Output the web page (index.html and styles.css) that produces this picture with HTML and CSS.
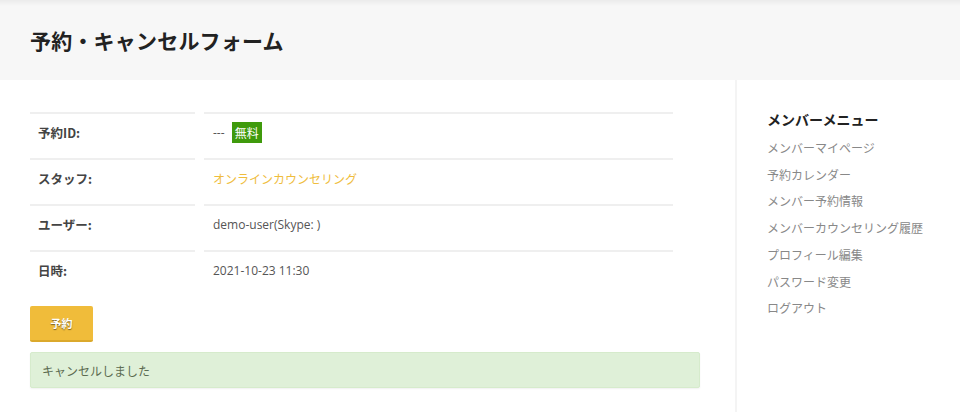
FILE: index.html
```html
<!DOCTYPE html>
<html lang="ja">
<head>
<meta charset="utf-8">
<link rel="stylesheet" href="styles.css">
</head>
<body>
<header class="page-header">
  <h1 class="page-title">予約・キャンセルフォーム</h1>
</header>
<div class="page-body">
  <main class="main">
    <div class="info-table">
      <div class="cell label">予約ID:</div>
      <div class="cell value">--- <span class="badge">無料</span></div>
      <div class="cell label">スタッフ:</div>
      <div class="cell value"><a class="staff-link" href="#">オンラインカウンセリング</a></div>
      <div class="cell label">ユーザー:</div>
      <div class="cell value">demo-user(Skype: )</div>
      <div class="cell label">日時:</div>
      <div class="cell value">2021-10-23 11:30</div>
    </div>
    <button class="btn-reserve" type="button">予約</button>
    <div class="alert-success">キャンセルしました</div>
  </main>
  <aside class="sidebar">
    <h2 class="sidebar-title">メンバーメニュー</h2>
    <ul class="menu">
      <li><a href="#">メンバーマイページ</a></li>
      <li><a href="#">予約カレンダー</a></li>
      <li><a href="#">メンバー予約情報</a></li>
      <li><a href="#">メンバーカウンセリング履歴</a></li>
      <li><a href="#">プロフィール編集</a></li>
      <li><a href="#">パスワード変更</a></li>
      <li><a href="#">ログアウト</a></li>
    </ul>
  </aside>
</div>
</body>
</html>
```

FILE: styles.css
```css
* { box-sizing: border-box; }
html, body { margin: 0; padding: 0; }
body {
  font-family: "Open Sans", "Noto Sans CJK JP", sans-serif;
  background: #fff;
  color: #555;
  width: 960px;
  height: 412px;
  overflow: hidden;
}
.page-header {
  height: 80px;
  background: linear-gradient(#ebebeb 0, #f7f7f7 6px, #f7f7f7 100%);
  display: flex;
  align-items: center;
  padding-left: 30px;
}
.page-title {
  margin: 0;
  font-family: "Noto Sans CJK JP", sans-serif;
  font-size: 21px;
  font-weight: 700;
  color: #222;
  letter-spacing: 0.2px;
}
.page-body {
  display: flex;
}
.main {
  width: 735px;
  padding: 32px 35px 0 30px;
}
.info-table {
  display: grid;
  grid-template-columns: 165px 469px;
  column-gap: 9px;
}
.cell {
  height: 46px;
  border-top: 2px solid #efefef;
  display: flex;
  align-items: center;
  padding-bottom: 7px;
  font-size: 12px;
}
.label {
  padding-left: 8px;
  font-family: "Noto Sans CJK JP", sans-serif;
  font-weight: 700;
  font-size: 12.5px;
  color: #444;
}
.value {
  padding-left: 9px;
  color: #555;
  white-space: pre;
}
.badge {
  display: inline-block;
  background: #3f9a0c;
  color: #fff;
  font-family: "Noto Sans CJK JP", sans-serif;
  font-size: 12px;
  line-height: 21px;
  padding: 0 3px;
  margin-left: 4px;
}
.staff-link {
  color: #efbd3d;
  text-decoration: none;
  font-family: "Noto Sans CJK JP", sans-serif;
}
.btn-reserve {
  display: block;
  margin-top: 10px;
  width: 63px;
  height: 36px;
  background: #f0bc3a;
  border: none;
  border-bottom: 2px solid #dba92c;
  border-radius: 2px;
  color: #fff;
  font-family: "Noto Sans CJK JP", sans-serif;
  font-size: 11px;
  font-weight: 700;
  text-shadow: 0 1px 1px rgba(0,0,0,0.5);
  padding: 0;
}
.alert-success {
  margin-top: 10px;
  width: 670px;
  height: 36px;
  background: #dff0d8;
  border: 1px solid #d6ebcc;
  border-radius: 2px;
  color: #5b6b50;
  font-family: "Noto Sans CJK JP", sans-serif;
  font-size: 12px;
  display: flex;
  align-items: center;
  padding-left: 11px;
  box-shadow: 0 1px 2px rgba(0,0,0,0.06);
}
.sidebar {
  border-left: 2px solid #f4f4f4;
  min-height: 332px;
  padding: 29px 0 0 30px;
  font-family: "Noto Sans CJK JP", sans-serif;
}
.sidebar-title {
  margin: 0 0 6px;
  font-size: 14px;
  font-weight: 700;
  color: #222;
  line-height: 20px;
}
.menu {
  list-style: none;
  margin: 0;
  padding: 0;
}
.menu li {
  line-height: 26.7px;
  font-size: 12px;
}
.menu a {
  color: #888;
  text-decoration: none;
}
```
